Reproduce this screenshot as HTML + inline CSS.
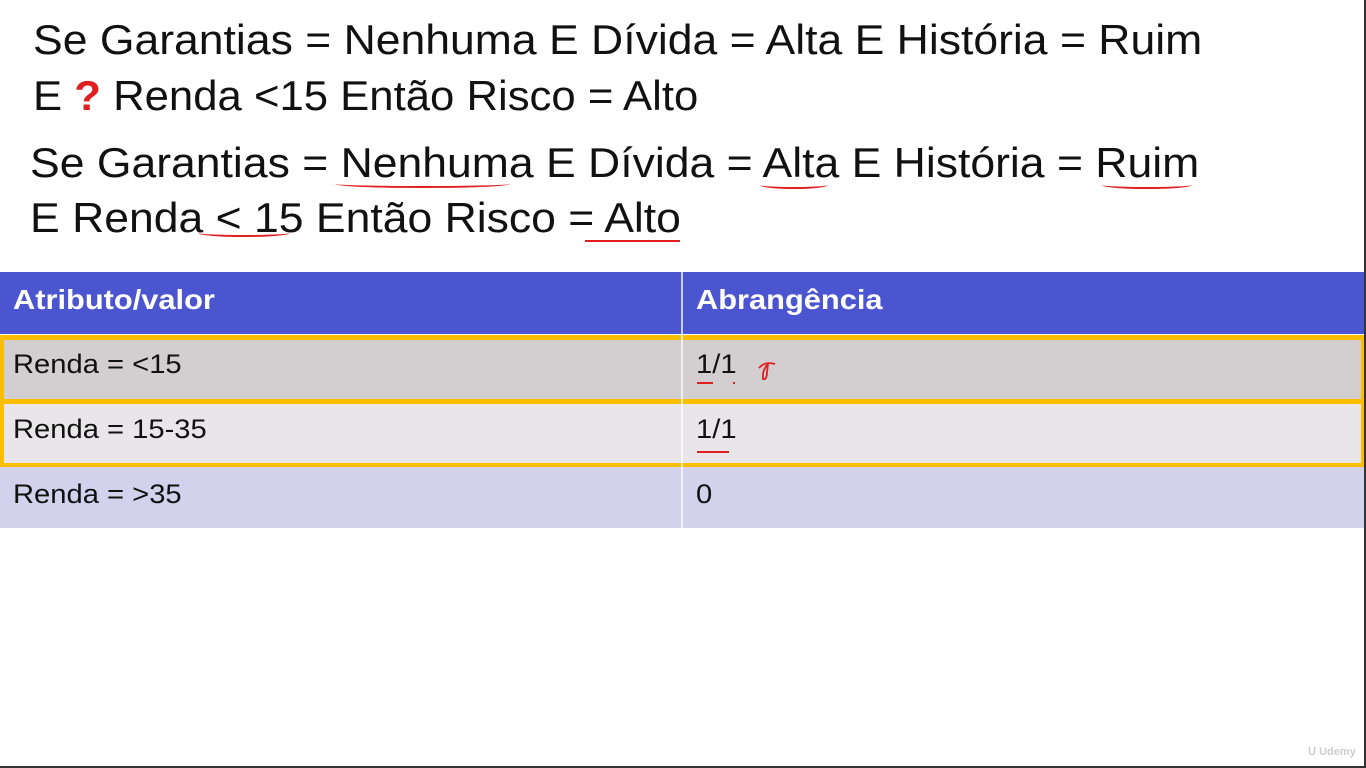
<!DOCTYPE html>
<html><head><meta charset="utf-8"><style>
html,body{margin:0;padding:0;}
body{width:1366px;height:768px;background:#fff;position:relative;overflow:hidden;font-family:"Liberation Sans",sans-serif;color:#111;}
.t{position:absolute;white-space:nowrap;font-size:42px;line-height:1;transform-origin:0 0;transform:scaleX(1.06);}
.u{position:absolute;border-bottom:2px solid #e02020;border-radius:50%;height:6px;}
.row{position:absolute;left:0;width:1365px;}
.c{position:absolute;font-size:27px;white-space:nowrap;transform-origin:0 0;transform:scaleX(1.08);}
.h{font-size:28px;font-weight:bold;color:#fff;transform:scaleX(1.1);}
</style></head><body>
<div class="t" style="left:33px;top:19px;">Se Garantias = Nenhuma E Dívida = Alta E História = Ruim</div>
<div class="t" style="left:33px;top:75px;transform:scaleX(1.04)">E <span style="color:#e02020;font-weight:bold">?</span> Renda &lt;15 Então Risco = Alto</div>
<div class="t" style="left:30px;top:142px;">Se Garantias = Nenhuma E Dívida = Alta E História = Ruim</div>
<div class="t" style="left:30px;top:197px;">E Renda &lt; 15 Então Risco = Alto</div>
<div class="u" style="left:335px;top:180px;width:175px"></div>
<div class="u" style="left:760px;top:181px;width:68px"></div>
<div class="u" style="left:1102px;top:181px;width:90px"></div>
<div class="u" style="left:198px;top:229px;width:92px"></div>
<div style="position:absolute;left:585px;top:240px;width:95px;border-top:2px solid #e02020"></div>

<div class="row" style="top:272px;height:62px;background:#4b55d0"></div>
<div class="row" style="top:335px;height:132px;background:#fbbd00"></div>
<div style="position:absolute;left:4px;top:340px;width:1357px;height:59px;background:#d3cfd0"></div>
<div style="position:absolute;left:4px;top:404px;width:1357px;height:59px;background:#e8e6e8"></div>
<div class="row" style="top:467px;height:61px;background:#d3d1ec"></div>
<div style="position:absolute;left:681px;top:272px;width:2px;height:256px;background:rgba(255,255,255,0.7)"></div>

<div class="c h" style="left:13px;top:284px;">Atributo/valor</div>
<div class="c h" style="left:696px;top:284px;">Abrangência</div>
<div class="c" style="left:13px;top:349px">Renda = &lt;15</div>
<div class="c" style="left:696px;top:349px">1/1</div>
<div class="c" style="left:13px;top:414px">Renda = 15-35</div>
<div class="c" style="left:696px;top:414px">1/1</div>
<div class="c" style="left:13px;top:479px">Renda = &gt;35</div>
<div class="c" style="left:696px;top:479px">0</div>
<div style="position:absolute;left:697px;top:382px;width:16px;border-top:2px solid #e02020"></div>
<div style="position:absolute;left:733px;top:382px;width:2px;height:2px;background:#e02020"></div>
<div style="position:absolute;left:697px;top:451px;width:32px;border-top:2px solid #e02020"></div>
<svg style="position:absolute;left:755px;top:355px" width="30" height="30"><path d="M4 13 Q10 6 20 9 M13 9 Q7 15 8 24 Q12 25 12 17 L13 9" stroke="#e02020" stroke-width="1.8" fill="none"/></svg>

<div style="position:absolute;left:1364px;top:0;width:2px;height:768px;background:#333"></div>
<div style="position:absolute;left:0;top:766px;width:1366px;height:2px;background:#333"></div>
<div style="position:absolute;left:1308px;top:745px;font-size:11px;color:#ccc;font-weight:bold">ᑌ Udemy</div>
</body></html>
